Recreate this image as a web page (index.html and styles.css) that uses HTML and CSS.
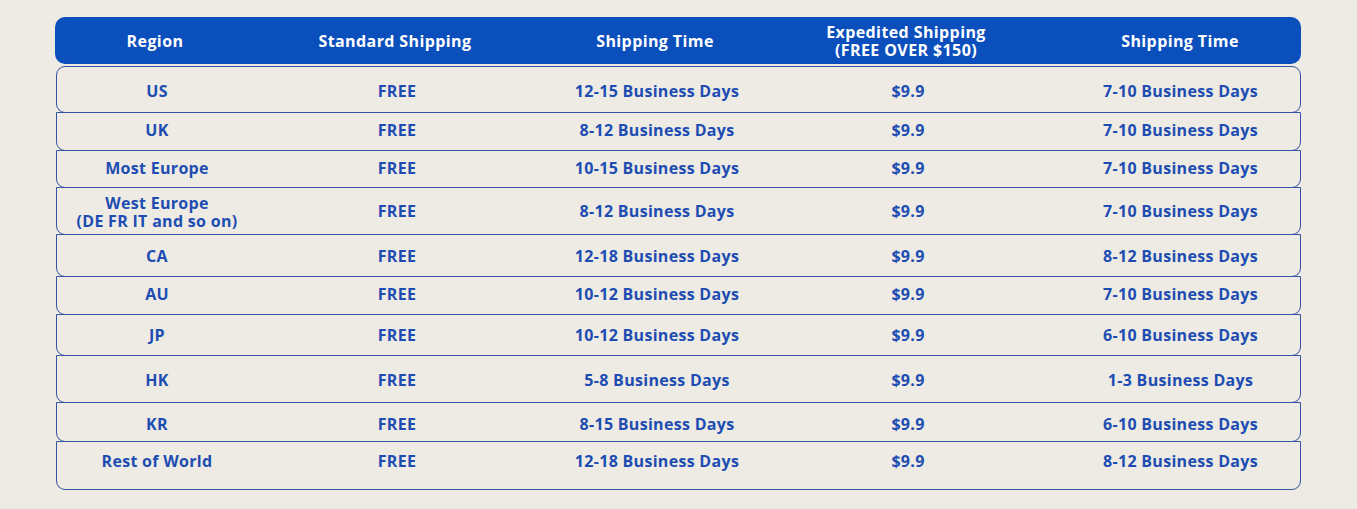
FILE: index.html
```html
<!DOCTYPE html>
<html lang="en">
<head>
<meta charset="utf-8">
<title>Shipping</title>
<link rel="stylesheet" href="styles.css">
</head>
<body>
<div class="table">
  <div class="head">
    <div class="c">Region</div>
    <div class="c">Standard Shipping</div>
    <div class="c">Shipping Time</div>
    <div class="c two">Expedited Shipping<br>(FREE OVER $150)</div>
    <div class="c last">Shipping Time</div>
  </div>
  <div class="rows">
    <div class="row r1"><div class="c">US</div><div class="c">FREE</div><div class="c">12-15 Business Days</div><div class="c">$9.9</div><div class="c last">7-10 Business Days</div></div>
    <div class="row r2"><div class="c">UK</div><div class="c">FREE</div><div class="c">8-12 Business Days</div><div class="c">$9.9</div><div class="c last">7-10 Business Days</div></div>
    <div class="row r3"><div class="c">Most Europe</div><div class="c">FREE</div><div class="c">10-15 Business Days</div><div class="c">$9.9</div><div class="c last">7-10 Business Days</div></div>
    <div class="row r4"><div class="c two">West Europe<br>(DE FR IT and so on)</div><div class="c">FREE</div><div class="c">8-12 Business Days</div><div class="c">$9.9</div><div class="c last">7-10 Business Days</div></div>
    <div class="row r5"><div class="c">CA</div><div class="c">FREE</div><div class="c">12-18 Business Days</div><div class="c">$9.9</div><div class="c last">8-12 Business Days</div></div>
    <div class="row r6"><div class="c">AU</div><div class="c">FREE</div><div class="c">10-12 Business Days</div><div class="c">$9.9</div><div class="c last">7-10 Business Days</div></div>
    <div class="row r7"><div class="c">JP</div><div class="c">FREE</div><div class="c">10-12 Business Days</div><div class="c">$9.9</div><div class="c last">6-10 Business Days</div></div>
    <div class="row r8"><div class="c">HK</div><div class="c">FREE</div><div class="c">5-8 Business Days</div><div class="c">$9.9</div><div class="c last">1-3 Business Days</div></div>
    <div class="row r9"><div class="c">KR</div><div class="c">FREE</div><div class="c">8-15 Business Days</div><div class="c">$9.9</div><div class="c last">6-10 Business Days</div></div>
    <div class="row r10"><div class="c">Rest of World</div><div class="c">FREE</div><div class="c">12-18 Business Days</div><div class="c">$9.9</div><div class="c last">8-12 Business Days</div></div>
  </div>
</div>
</body>
</html>
```
FILE: styles.css
```css
html, body {
  margin: 0;
  padding: 0;
  background: #eeebe4;
}
body {
  font-family: "Open Sans", "DejaVu Sans", sans-serif;
  font-weight: 700;
  font-size: 16px;
  letter-spacing: 0.3px;
}
.table {
  margin: 17px 0 0 55px;
  width: 1246px;
}
.head, .row {
  display: grid;
  grid-template-columns: 200px 280px 240px 262px 1fr;
  align-items: center;
}
.head {
  background: #0b4fbd;
  color: #ffffff;
  height: 47px;
  border-radius: 10px;
  font-size: 16px;
  letter-spacing: 0.4px;
}
.c {
  text-align: center;
  line-height: 18px;
  white-space: nowrap;
}
.two {
  line-height: 18px;
  padding-top: 1px;
}
.last {
  padding-left: 22px;
}
.rows {
  margin-top: 2px;
  margin-left: 1px;
  color: #1d4db2;
}
.row {
  border: 1.3px solid #3552a3;
  border-radius: 0 0 9px 9px;
  margin-top: -1px;
  box-sizing: border-box;
}
.row.r1 { border-radius: 9px; height: 47px; margin-top: 0; padding-top: 2px; }
.r2 { height: 39px; padding-bottom: 3px; }
.r3 { height: 38px; padding-bottom: 3px; }
.r4 { height: 48px; }
.r5 { height: 43px; padding-top: 1px; }
.r6 { height: 39px; padding-bottom: 3px; }
.r7 { height: 42px; padding-bottom: 1px; }
.r8 { height: 48px; padding-top: 1px; }
.r9 { height: 40px; padding-top: 4px; }
.r10 { height: 49px; padding-bottom: 10px; }
```
